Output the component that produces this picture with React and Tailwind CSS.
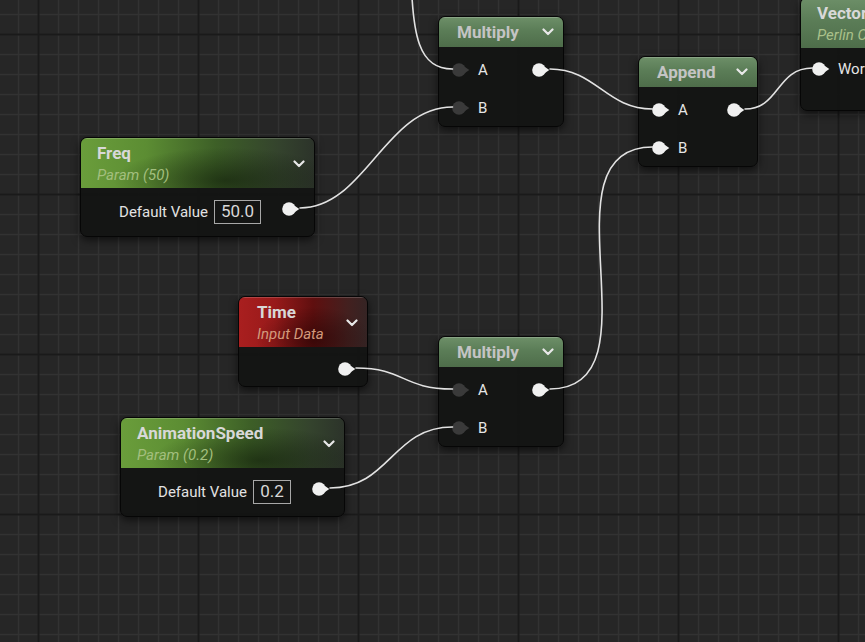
import React from "react";

function Pin({ white = true, className = "" }) {
  const c = white ? "#f0f0f0" : "#3a3a3a";
  return (
    <svg width="18" height="14" viewBox="0 0 18 14" className={"shrink-0 " + className}>
      <circle cx="7" cy="7" r="6.8" fill={c} />
      <path d="M13 4.1 L17.3 7 L13 9.9 Z" fill={c} />
    </svg>
  );
}

function Chevron({ className = "" }) {
  return (
    <svg width="12" height="8" viewBox="0 0 12 8" className={"shrink-0 " + className}>
      <path d="M1.5 1.5 L6 6 L10.5 1.5" stroke="#e8e8e8" strokeWidth="2.2" fill="none" strokeLinecap="round" strokeLinejoin="round" />
    </svg>
  );
}

const NODE =
  "absolute flex flex-col rounded-[7px] border border-[#060606] bg-[#131413]/95 shadow-[0_3px_8px_rgba(0,0,0,0.6)] overflow-hidden";

const PARAM_HDR =
  "bg-[radial-gradient(ellipse_at_62%_85%,rgba(10,20,5,0.55),transparent_55%),linear-gradient(90deg,#6a9d3b_0%,#5c8d33_28%,#3d5f27_58%,#34432d_85%,#2c332a_100%)]";
const TIME_HDR =
  "bg-[radial-gradient(ellipse_at_58%_85%,rgba(20,0,0,0.5),transparent_55%),linear-gradient(90deg,#a91f1f_0%,#981a1a_28%,#5f0f0f_58%,#43201f_85%,#352424_100%)]";
const MATH_HDR =
  "bg-[linear-gradient(180deg,#6d8f68_0%,#5b7d57_45%,#4e6d4a_100%)]";

function TwoLineHeader({ hdr, title, sub, subColor, pl = "pl-[16px]" }) {
  return (
    <div className={"h-[50px] shrink-0 flex items-center pr-[9px] shadow-[inset_0_1px_0_rgba(255,255,255,0.18)] " + hdr + " " + pl}>
      <div className="flex-1 flex flex-col min-w-0">
        <div className="text-[17px] leading-[20px] font-bold text-[#d8d8d8] whitespace-nowrap">{title}</div>
        <div className={"text-[15px] leading-[18px] italic mt-[3px] whitespace-nowrap " + subColor}>{sub}</div>
      </div>
      <Chevron className="mt-[2px]" />
    </div>
  );
}

function MathHeader({ title }) {
  return (
    <div className={"h-[30px] shrink-0 flex items-center pl-[18px] pr-[9px] shadow-[inset_0_1px_0_rgba(255,255,255,0.2)] " + MATH_HDR}>
      <div className="flex-1 text-[17px] leading-[20px] font-bold text-[#c4c4c4]">{title}</div>
      <Chevron />
    </div>
  );
}

function MathNode({ pos, title, inWhite, pr }) {
  return (
    <div className={NODE + " " + pos}>
      <MathHeader title={title} />
      <div className="flex-1 flex flex-col pt-[16px] gap-[24px]">
        <div className={"flex items-center h-[14px] pl-[13px] " + pr}>
          <Pin white={inWhite} />
          <span className="ml-[8px] text-[15px] leading-[14px] text-[#e6e6e6]">A</span>
          <Pin className="ml-auto" />
        </div>
        <div className="flex items-center h-[14px] pl-[13px]">
          <Pin white={inWhite} />
          <span className="ml-[8px] text-[15px] leading-[14px] text-[#e6e6e6]">B</span>
        </div>
      </div>
    </div>
  );
}

function ParamNode({ pos, title, sub, value, boxW }) {
  return (
    <div className={NODE + " " + pos}>
      <TwoLineHeader hdr={PARAM_HDR} title={title} sub={sub} subColor="text-[#a3bf7e]" />
      <div className="flex-1 flex items-start justify-end pr-[14px] pt-[12px]">
        <div className="flex items-center h-[24px]">
          <span className="text-[15px] text-[#e2e2e2] mr-[6px] whitespace-nowrap">Default Value</span>
          <div className={"h-[24px] border border-[#a8a8a8] flex items-center justify-center text-[17px] text-[#d8d8d8] " + boxW}>
            {value}
          </div>
          <Pin className="ml-[21px] mb-[6px]" />
        </div>
      </div>
    </div>
  );
}

function Grid() {
  const minorV = [];
  for (let x = 18; x < 865; x += 20) minorV.push(x);
  const minorH = [];
  for (let y = 14; y < 642; y += 20) minorH.push(y);
  const majorV = [38, 198, 358, 518, 678, 838];
  const majorH = [34, 194, 354, 514];
  return (
    <svg className="absolute inset-0" width="865" height="642">
      {minorV.map((x) => (
        <rect key={"v" + x} x={x - 0.25} y="0" width="1.6" height="642" fill="#323232" />
      ))}
      {minorH.map((y) => (
        <rect key={"h" + y} x="0" y={y - 0.25} width="865" height="1.6" fill="#323232" />
      ))}
      {majorV.map((x) => (
        <rect key={"V" + x} x={x - 0.5} y="0" width="2" height="642" fill="#1a1a1a" />
      ))}
      {majorH.map((y) => (
        <rect key={"H" + y} x="0" y={y - 0.5} width="865" height="2" fill="#1a1a1a" />
      ))}
    </svg>
  );
}

function Wires() {
  return (
    <svg className="absolute inset-0 pointer-events-none" width="865" height="642">
      <g fill="none" stroke="#e2e2e2" strokeWidth="1.6" strokeLinecap="round">
        <path d="M 411 -40 C 411 40, 420 69, 452.5 69" />
        <path d="M 300 208 C 365 208, 385 107, 452.5 107" />
        <path d="M 550 69 C 596 69, 606 109, 652.5 109" />
        <path d="M 745 109 C 780 109, 776 68, 812.5 68" />
        <path d="M 356 368 C 405 368, 402 389, 452.5 389" />
        <path d="M 330 488 C 390 488, 392 427, 452.5 427" />
        <path d="M 550 389 C 664 389, 537 147, 652.5 147" />
      </g>
    </svg>
  );
}

export default function App() {
  return (
    <div className="relative w-[865px] h-[642px] overflow-hidden bg-[#262626] font-['Roboto',sans-serif]">
      <Grid />

      {/* Vector node (partially off-screen, as in the reference) */}
      <div className={NODE + " left-[800px] top-[-3px] w-[130px] h-[114px]"}>
        <TwoLineHeader hdr={MATH_HDR} title="Vector Noise" sub="Perlin Curl" subColor="text-[#a9c08a]" />
        <div className="flex-1 flex flex-col pt-[14px] pl-[11px]">
          <div className="flex items-center h-[14px]">
            <Pin />
            <span className="ml-[8px] text-[15px] leading-[14px] text-[#e6e6e6] whitespace-nowrap">World Position</span>
          </div>
        </div>
      </div>

      <MathNode pos="left-[438px] top-[16px] w-[126px] h-[111px]" title="Multiply" inWhite={false} pr="pr-[13px]" />
      <MathNode pos="left-[638px] top-[56px] w-[120px] h-[111px]" title="Append" inWhite={true} pr="pr-[12px]" />
      <MathNode pos="left-[438px] top-[336px] w-[126px] h-[111px]" title="Multiply" inWhite={false} pr="pr-[13px]" />

      <ParamNode pos="left-[80px] top-[137px] w-[235px] h-[100px]" title="Freq" sub="Param (50)" value="50.0" boxW="w-[47px]" />
      <ParamNode pos="left-[120px] top-[417px] w-[225px] h-[100px]" title="AnimationSpeed" sub="Param (0.2)" value="0.2" boxW="w-[38px]" />

      {/* Time node */}
      <div className={NODE + " left-[238px] top-[296px] w-[130px] h-[91px]"}>
        <TwoLineHeader hdr={TIME_HDR} title="Time" sub="Input Data" subColor="text-[#d39a7c]" pl="pl-[18px]" />
        <div className="flex-1 flex justify-end items-start pt-[15px] pr-[11px]">
          <Pin />
        </div>
      </div>

      <Wires />
    </div>
  );
}
